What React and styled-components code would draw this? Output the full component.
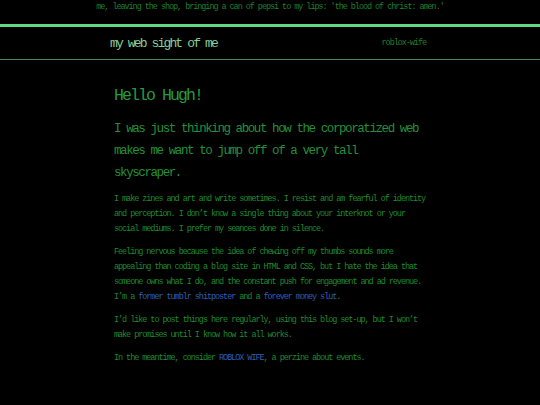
import React from "react";
import styled, { createGlobalStyle } from "styled-components";

const Global = createGlobalStyle`
  html, body { margin: 0; padding: 0; background: #000; }
  body {
    font-family: "Liberation Mono", "DejaVu Sans Mono", monospace;
    color: #1f8a30;
  }
  * { box-sizing: border-box; }
`;

const Page = styled.div`
  min-height: 405px;
  background: #000;
`;

const Quote = styled.div`
  text-align: center;
  font-size: 8.5px;
  letter-spacing: -1.06px;
  line-height: 15px;
  color: #1f7f30;
  margin-bottom: 9px;
`;

const Header = styled.header`
  border-top: 3px solid #5ddc88;
  border-bottom: 1px solid #3f8a57;
  height: 36px;
`;

const HeaderInner = styled.div`
  width: 320px;
  margin: 0 auto;
  padding-right: 4px;
  height: 100%;
  display: flex;
  align-items: center;
  justify-content: space-between;
`;

const SiteTitle = styled.div`
  font-size: 13px;
  letter-spacing: -1.86px;
  color: #86cf99;
  padding-top: 1px;
`;

const NavLink = styled.a`
  font-size: 8.5px;
  letter-spacing: -1.06px;
  color: #1f7f30;
  text-decoration: none;
`;

const Main = styled.main`
  width: 312px;
  margin: 25px auto 0;
`;

const Hello = styled.h1`
  margin: 0 0 11px;
  font-weight: normal;
  font-size: 16.5px;
  letter-spacing: -1.9px;
  line-height: 22px;
  color: #279a42;
`;

const Lead = styled.h2`
  margin: 0 0 8px;
  font-weight: normal;
  font-size: 12.5px;
  letter-spacing: -1.42px;
  line-height: 22px;
  color: #22913a;
`;

const Para = styled.p`
  margin: 0 0 8px;
  font-size: 8.5px;
  letter-spacing: -1.06px;
  line-height: 15px;
  color: #1e8a2f;
`;

const Link = styled.a`
  color: #2c5fb6;
  text-decoration: none;
`;

export default function App() {
  return (
    <Page>
      <Global />
      <Quote>
        me, leaving the shop, bringing a can of pepsi to my lips: 'the blood of christ: amen.'
      </Quote>
      <Header>
        <HeaderInner>
          <SiteTitle>my web sight of me</SiteTitle>
          <NavLink href="#">roblox-wife</NavLink>
        </HeaderInner>
      </Header>
      <Main>
        <Hello>Hello Hugh!</Hello>
        <Lead>
          I was just thinking about how the corporatized web makes me want to jump off of a very tall skyscraper.
        </Lead>
        <Para>
          I make zines and art and write sometimes. I resist and am fearful of identity and perception. I don’t know a single thing about your interknot or your social mediums. I prefer my seances done in silence.
        </Para>
        <Para>
          Feeling nervous because the idea of chewing off my thumbs sounds more appealing than coding a blog site in HTML and CSS, but I hate the idea that someone owns what I do, and the constant push for engagement and ad revenue. I’m a <Link href="#">former tumblr shitposter</Link> and a <Link href="#">forever money slut</Link>.
        </Para>
        <Para>
          I’d like to post things here regularly, using this blog set-up, but I won’t make promises until I know how it all works.
        </Para>
        <Para>
          In the meantime, consider <Link href="#">ROBLOX WIFE</Link>, a perzine about events.
        </Para>
      </Main>
    </Page>
  );
}
